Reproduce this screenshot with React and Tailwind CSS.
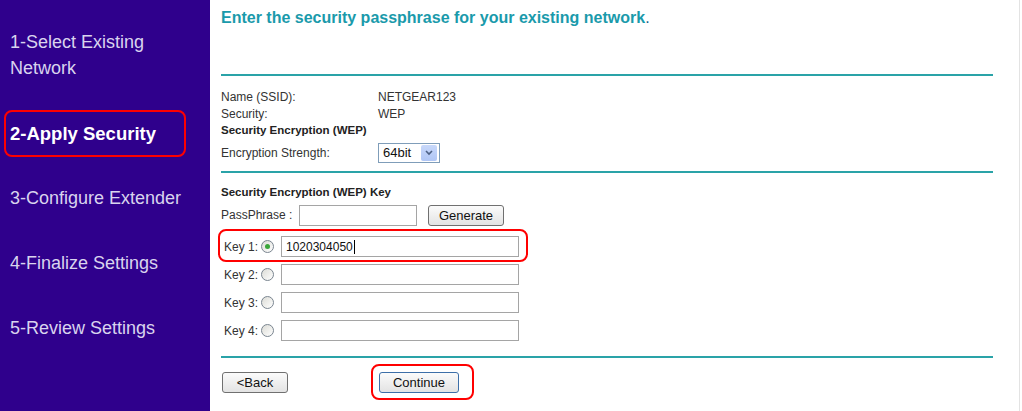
import React from "react";

/* ---------- Small pieces ---------- */

const Radio = ({ checked }) => (
  <span className="w-[13px] h-[13px] rounded-full border border-[#7a8590] bg-gradient-to-br from-[#dcdcd6] to-white flex items-center justify-center shrink-0">
    {checked && <span className="w-[5px] h-[5px] rounded-full bg-[#3aa63a]" />}
  </span>
);

const Button = ({ children, w, blue }) => (
  <button
    className={`h-[21px] ${w} rounded-[3px] border ${
      blue ? "border-[#3d6fa8]" : "border-[#707070]"
    } bg-gradient-to-b from-[#fbfbfb] to-[#e3e3e3] text-[13px] text-[#111] leading-none`}
  >
    {children}
  </button>
);

const KeyRow = ({ n, checked, value }) => (
  <div className="flex items-center h-[21px]">
    <span className="w-[40px] pl-[3px] text-[12px] text-[#333]">Key {n}:</span>
    <Radio checked={checked} />
    <div className="ml-[7px] w-[238px] h-[21px] border border-[#a5a5a5] bg-white flex items-center pl-[4px] text-[12px] text-[#111]">
      {value}
      {value && <span className="w-px h-[14px] bg-black ml-px" />}
    </div>
  </div>
);

const steps = [
  { label: "3-Configure Extender", mt: "mt-[28px]" },
  { label: "4-Finalize Settings", mt: "mt-[39px]" },
  { label: "5-Review Settings", mt: "mt-[39px]" },
];

/* ---------- Page ---------- */

export default function App() {
  return (
    <div className="w-[1022px] h-[411px] flex bg-white overflow-hidden font-['Liberation_Sans',Arial,sans-serif]">
      {/* Sidebar */}
      <div className="w-[210px] h-full bg-[#2f008c] pt-[29px] text-[18px] leading-[26px] text-[#d9d4ee]">
        <div className="pl-[10px]">
          1-Select Existing
          <br />
          Network
        </div>
        <div className="relative mt-[29px] h-[47px] flex items-center pl-[10px] font-bold text-[18.5px] text-white">
          2-Apply Security
          <div className="absolute left-[4px] top-0 w-[182px] h-[47px] border-2 border-[#ff0000] rounded-[8px]" />
        </div>
        {steps.map((s) => (
          <div key={s.label} className={`${s.mt} pl-[10px]`}>
            {s.label}
          </div>
        ))}
      </div>

      {/* Main */}
      <div className="w-[810px] h-full border-r border-[#e3e3e3] pl-[11px] text-[12px] text-[#333]">
        <div className="pt-[9px] leading-[18px] text-[16px] font-bold text-[#1a9aab]">
          Enter the security passphrase for your existing network
          <span className="font-normal text-[#1b5f86]">.</span>
        </div>

        <div className="mt-[47px] w-[772px] h-[2px] bg-[#2aa3a8]" />

        <div className="mt-[12px] flex h-[17px] items-center">
          <span className="w-[157px]">Name (SSID):</span>
          <span>NETGEAR123</span>
        </div>
        <div className="flex h-[17px] items-center">
          <span className="w-[157px]">Security:</span>
          <span>WEP</span>
        </div>
        <div className="h-[18px] flex items-center font-bold text-[11.5px] text-[#222]">
          Security Encryption (WEP)
        </div>
        <div className="mt-[2px] flex h-[22px] items-center">
          <span className="w-[157px]">Encryption Strength:</span>
          <div className="w-[62px] h-[20px] border border-[#7f9db9] bg-white flex items-center justify-between pl-[4px] pr-[2px] text-[13px] text-[#111]">
            64bit
            <span className="w-[16px] h-[16px] rounded-[2px] bg-gradient-to-b from-[#c8d8fa] to-[#b0c6f5] flex items-center justify-center">
              <svg width="8" height="6" viewBox="0 0 8 6">
                <path d="M1 1 L4 4 L7 1" fill="none" stroke="#4d6185" strokeWidth="1.6" />
              </svg>
            </span>
          </div>
        </div>

        <div className="mt-[7px] w-[772px] h-[2px] bg-[#2aa3a8]" />

        <div className="mt-[12px] h-[16px] flex items-center font-bold text-[11.5px] text-[#222]">
          Security Encryption (WEP) Key
        </div>
        <div className="mt-[3px] flex items-center h-[22px]">
          <span className="w-[78px]">PassPhrase :</span>
          <div className="w-[118px] h-[21px] border border-[#a5a5a5] bg-white" />
          <div className="ml-[11px]">
            <Button w="w-[76px]">Generate</Button>
          </div>
        </div>

        <div className="mt-[10px] flex flex-col gap-[7px]">
          <div className="relative">
            <KeyRow n={1} checked value="1020304050" />
            <div className="absolute left-[-3px] top-[-7px] w-[310px] h-[33px] border-2 border-[#ff0000] rounded-[8px]" />
          </div>
          <KeyRow n={2} />
          <KeyRow n={3} />
          <KeyRow n={4} />
        </div>

        <div className="mt-[15px] w-[772px] h-[2px] bg-[#2aa3a8]" />

        <div className="mt-[14px] flex items-center">
          <div className="ml-[1px]">
            <Button w="w-[66px]">&lt;Back</Button>
          </div>
          <div className="relative ml-[91px]">
            <Button w="w-[80px]" blue>
              Continue
            </Button>
            <div className="absolute left-[-8px] top-[-8px] w-[103px] h-[36px] border-2 border-[#ff0000] rounded-[8px]" />
          </div>
        </div>
      </div>
    </div>
  );
}
